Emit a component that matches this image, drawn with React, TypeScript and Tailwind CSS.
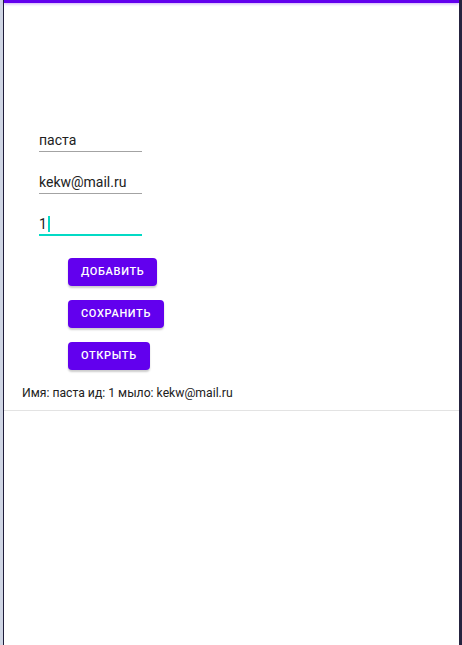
import React from 'react';

const Field = ({ value, active }: { value: string; active?: boolean }) => {
  return (
    <div
      className={
        active
          ? 'w-[103px] border-b-2 border-[#03dac5] pb-[1px] text-[14px] leading-[18px] text-[#212121] flex items-center'
          : 'w-[103px] border-b border-[#a3a3a3] pb-[2px] text-[14px] leading-[18px] text-[#212121]'
      }
    >
      <span>{value}</span>
      {active && <span className="ml-[1px] inline-block h-[16px] w-[2px] bg-[#03dac5]"></span>}
    </div>
  );
};

const PurpleButton = ({ label }: { label: string }) => (
  <button className="h-[28px] rounded-[4px] bg-[#6200ee] px-[13px] text-[11px] font-medium tracking-[0.06em] text-white shadow-[0_2px_2px_rgba(0,0,0,0.2)]">
    {label}
  </button>
);

export default function App() {
  return (
    <div className="flex h-[645px] w-[462px] bg-white" style={{ fontFamily: 'Roboto, "Noto Sans", sans-serif' }}>
      <div className="w-[3px] bg-[#cfd5e4]"></div>
      <div className="w-px bg-[#1f1d3a]"></div>
      <div className="flex flex-1 flex-col">
        <div className="h-[3px] bg-[#6200ee] shadow-[0_1px_3px_rgba(98,0,238,0.35)]"></div>
        <div className="flex flex-col gap-[21px] pl-[35px] pt-[128px]">
          <Field value="паста" />
          <Field value="kekw@mail.ru" />
          <Field value="1" active />
        </div>
        <div className="flex flex-col items-start gap-[14px] pl-[64px] pt-[22px]">
          <PurpleButton label="ДОБАВИТЬ" />
          <PurpleButton label="СОХРАНИТЬ" />
          <PurpleButton label="ОТКРЫТЬ" />
        </div>
        <div className="pl-[18px] pt-[15px] pb-[9px] text-[12.2px] leading-[16px] text-[#212121]">
          Имя: паста ид: 1 мыло: kekw@mail.ru
        </div>
        <div className="h-px bg-[#e3e3e3]"></div>
      </div>
      <div className="w-[3px] bg-[#25233f]"></div>
    </div>
  );
}
